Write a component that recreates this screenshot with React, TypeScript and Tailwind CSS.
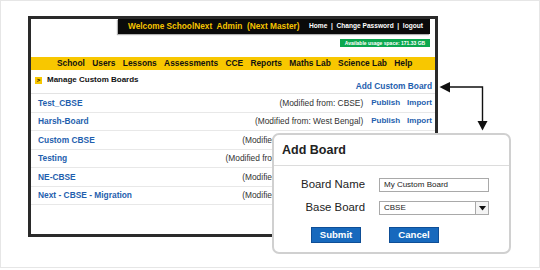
import React from "react";

const rows = [
  { name: "Test_CBSE", mod: "(Modified from: CBSE)" },
  { name: "Harsh-Board", mod: "(Modified from: West Bengal)" },
  { name: "Custom CBSE", mod: "(Modified from: Andhra Pradesh)" },
  { name: "Testing", mod: "(Modified from: Jammu and Kashmir)" },
  { name: "NE-CBSE", mod: "(Modified from: Andhra Pradesh)" },
  { name: "Next - CBSE - Migration", mod: "(Modified from: Andhra Pradesh)" },
];

const nav = ["School", "Users", "Lessons", "Assessments", "CCE", "Reports", "Maths Lab", "Science Lab", "Help"];

export default function App() {
  return (
    <div
      className="relative w-[540px] h-[268px] border border-[#e6e6e6] bg-white overflow-hidden"
      style={{ fontFamily: '"Liberation Sans", Arial, sans-serif' }}
    >
      {/* Main window */}
      <div className="ml-[27px] mt-[15px] w-[410px] h-[221px] border-[3px] border-[#2a2a2a] bg-white flex flex-col">
        {/* Header */}
        <div className="flex justify-end pr-[5px]">
          <div className="w-[312px] h-[15px] bg-[#0a0a0a] flex items-center justify-between pl-[10px] pr-[7px] shadow-[-1px_1px_1px_rgba(0,0,0,0.3)]">
            <span className="text-[8.3px] font-bold text-[#f5c400] whitespace-pre leading-none">
              Welcome SchoolNext  Admin  (Next Master)
            </span>
            <span className="text-[6.6px] font-bold text-white whitespace-pre leading-none">
              Home  |  Change Password  |  logout
            </span>
          </div>
        </div>
        {/* Usage badge */}
        <div className="flex justify-end pr-[5px] mt-[5px]">
          <div className="w-[90px] h-[8px] bg-[#0aa84f] flex items-center justify-center">
            <span className="text-[5px] font-bold text-white leading-none whitespace-nowrap">
              Available usage space: 171.33 GB
            </span>
          </div>
        </div>
        {/* Nav bar */}
        <div className="mt-[10px] h-[13px] bg-[#f8c700] flex items-center pl-[26px] gap-[7.3px]">
          {nav.map((n) => (
            <span key={n} className="text-[8.4px] font-bold text-[#111] leading-none whitespace-nowrap">
              {n}
            </span>
          ))}
        </div>
        {/* Manage row */}
        <div className="h-[23px] flex">
          <div className="self-start mt-[5px] h-[10px] flex items-center pl-[4px] gap-[5px]">
            <div className="w-[7px] h-[7px] bg-[#f8c700] flex items-center justify-center">
              <span className="text-[6px] font-bold text-black leading-none">&gt;</span>
            </div>
            <span className="text-[8px] font-bold text-[#111] leading-none whitespace-nowrap">
              Manage Custom Boards
            </span>
          </div>
          <div className="ml-auto self-end mb-[2px] h-[10px] flex items-center pr-[3px]">
            <span className="text-[8.4px] font-bold text-[#1f5fae] leading-none whitespace-nowrap">
              Add Custom Board
            </span>
          </div>
        </div>
        {/* Rows */}
        <div className="border-t border-[#e3e3e3]">
          {rows.map((r) => (
            <div key={r.name} className="h-[18.5px] border-b border-[#e8e8e8] flex items-center pl-[7px] pr-[3px]">
              <span className="text-[8.4px] font-bold text-[#1f5fae] leading-none whitespace-nowrap">{r.name}</span>
              <span className="ml-auto text-[8.4px] text-[#333] leading-none whitespace-nowrap">{r.mod}</span>
              <span className="ml-[8px] text-[8px] font-bold text-[#1f5fae] leading-none">Publish</span>
              <span className="ml-[7px] text-[8px] font-bold text-[#1f5fae] leading-none">Import</span>
            </div>
          ))}
        </div>
      </div>

      {/* Connector arrow */}
      <svg className="absolute left-[437px] top-[79px]" width="54" height="54" viewBox="0 0 54 54">
        <polyline points="12,7 44.5,7 44.5,42" fill="none" stroke="#111" strokeWidth="1.4" />
        <polygon points="1.5,7 12,2 12,12.5" fill="#111" />
        <polygon points="39.5,41 49.5,41 44.5,50.5" fill="#111" />
      </svg>

      {/* Dialog */}
      <div className="absolute left-[271px] top-[132px] w-[239px] h-[121px] bg-white border-2 border-[#d0d0d0] rounded-[7px] flex flex-col">
        <div className="h-[31px] border-b border-[#dcdcdc] flex items-center pl-[8px]">
          <span className="text-[12.5px] font-bold text-[#222] leading-none">Add Board</span>
        </div>
        <div className="flex flex-col mt-[12px] gap-[9px]">
          <div className="flex items-center h-[14px]">
            <span className="w-[91px] text-right text-[11.4px] text-[#222] leading-none">Board Name</span>
            <div className="ml-[14px] w-[110px] h-[14px] border border-[#a9a9a9] flex items-center pl-[4px]">
              <span className="text-[8px] text-[#222] leading-none whitespace-nowrap">My Custom Board</span>
            </div>
          </div>
          <div className="flex items-center h-[14px]">
            <span className="w-[91px] text-right text-[11.4px] text-[#222] leading-none">Base Board</span>
            <div className="ml-[14px] w-[110px] h-[14px] border border-[#a9a9a9] flex items-center">
              <span className="pl-[4px] text-[8px] text-[#222] leading-none">CBSE</span>
              <div className="ml-auto w-[13px] h-full border-l border-[#a9a9a9] bg-[#f4f4f4] flex items-center justify-center">
                <svg width="7" height="5" viewBox="0 0 7 5">
                  <polygon points="0,0 7,0 3.5,4.5" fill="#111" />
                </svg>
              </div>
            </div>
          </div>
        </div>
        <div className="flex mt-[12px] pl-[37px] gap-[28px]">
          <div className="w-[50px] h-[16px] bg-[#1769bd] border border-[#0e4e96] flex items-center justify-center">
            <span className="text-[9.6px] font-bold text-white leading-none">Submit</span>
          </div>
          <div className="w-[50px] h-[16px] bg-[#1769bd] border border-[#0e4e96] flex items-center justify-center">
            <span className="text-[9.6px] font-bold text-white leading-none">Cancel</span>
          </div>
        </div>
      </div>
    </div>
  );
}
